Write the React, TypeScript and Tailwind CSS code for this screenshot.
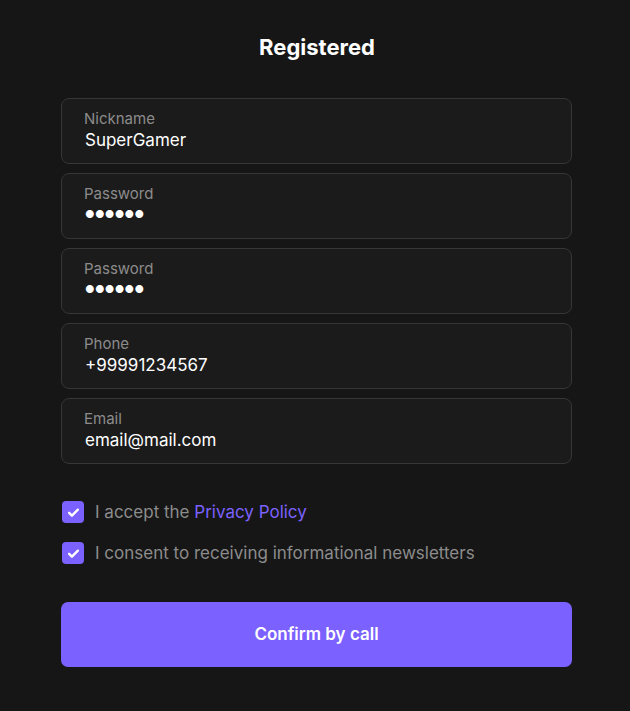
import React from 'react';

const fields = [
  { label: 'Nickname', value: 'SuperGamer' },
  { label: 'Password', value: '●●●●●●', secret: true },
  { label: 'Password', value: '●●●●●●', secret: true },
  { label: 'Phone', value: '+99991234567' },
  { label: 'Email', value: 'email@mail.com' },
];

function Check() {
  return (
    <div className="w-[22px] h-[22px] rounded-[4px] bg-[#7b61ff] flex items-center justify-center shrink-0">
      <svg width="15" height="15" viewBox="0 0 24 24" fill="none" stroke="white" strokeWidth="3.8" strokeLinecap="round" strokeLinejoin="round">
        <path d="M5 12.5l4.5 4.5L19 7.5" />
      </svg>
    </div>
  );
}

export default function App() {
  return (
    <div className="min-h-[711px] w-full bg-[#161616] font-['Inter',sans-serif] pt-[33px]">
      <div className="w-[511px] ml-[61px]">
        <h1 className="text-center text-white font-bold text-[22px] leading-[28px] pl-[1px]">Registered</h1>

        <div className="mt-[37px] flex flex-col gap-[9px]">
          {fields.map((f, i) => (
            <div key={i} className="h-[66px] rounded-[8px] border border-[#363636] bg-[#1b1b1b] pl-[22px] pt-[11px]">
              <div className="text-[15px] leading-[18px] text-[#8c8c8c]">{f.label}</div>
              {f.secret ? (
                <div className="text-[10.5px] leading-[24px] text-white tracking-[0.3px] pl-[1px]">{f.value}</div>
              ) : (
                <div className="text-[17px] leading-[24px] text-white pl-[1px]">{f.value}</div>
              )}
            </div>
          ))}
        </div>

        <div className="mt-[37px] flex flex-col gap-[19px] pl-[1px]">
          <div className="flex items-center gap-[11px] h-[22px]">
            <Check />
            <span className="text-[17px] leading-[22px] text-[#8c8c8c]">
              I accept the <span className="text-[#7b61ff]">Privacy Policy</span>
            </span>
          </div>
          <div className="flex items-center gap-[11px] h-[22px]">
            <Check />
            <span className="text-[17px] leading-[22px] text-[#8c8c8c]">I consent to receiving informational newsletters</span>
          </div>
        </div>

        <button className="mt-[38px] w-full h-[65px] rounded-[7px] bg-[#7b61ff] text-white font-semibold text-[17px]">
          Confirm by call
        </button>
      </div>
    </div>
  );
}
